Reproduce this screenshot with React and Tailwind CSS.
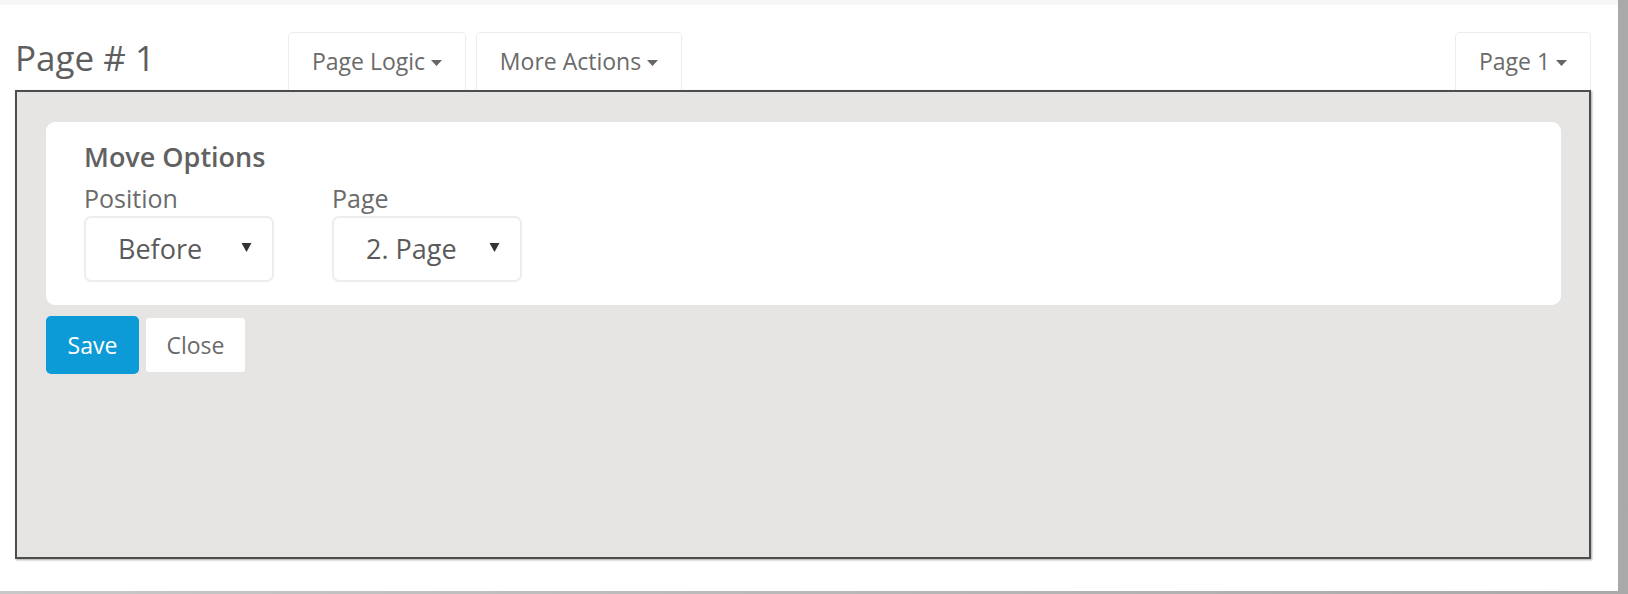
import React from "react";

function Caret({ className = "" }) {
  return (
    <svg width="11" height="6" viewBox="0 0 11 6" className={className}>
      <path d="M0 0 L11 0 L5.5 6 Z" fill="currentColor" />
    </svg>
  );
}

function Tab({ label, w }) {
  return (
    <div
      className={`h-[58px] ${w} bg-white border border-[#ececec] border-b-0 rounded-t-[5px] flex items-center justify-center gap-[6px] text-[23px] text-[#6a6a6a]`}
    >
      <span>{label}</span>
      <Caret className="mt-[3px] text-[#666]" />
    </div>
  );
}

function SelectBox({ label, value, textPad }) {
  return (
    <div className="flex flex-col">
      <div className="text-[25px] leading-[30px] text-[#6b6b6b]">{label}</div>
      <div
        className={`mt-[3px] h-[66px] w-[190px] bg-white border-2 border-[#ededed] rounded-[7px] flex items-center justify-between ${textPad} pr-[20px] text-[27px] text-[#5a5a5a]`}
      >
        <span>{value}</span>
        <svg width="11" height="11" viewBox="0 0 11 11" className="text-[#333] mb-[4px]">
          <path d="M0.5 1 L10.5 1 L5.5 10 Z" fill="currentColor" />
        </svg>
      </div>
    </div>
  );
}

export default function App() {
  return (
    <div
      className="w-[1628px] h-[594px] bg-gradient-to-r from-[#c8c8c8] to-[#a9a9a9] overflow-hidden"
      style={{ fontFamily: '"Open Sans", "Noto Sans", sans-serif' }}
    >
      <div className="w-[1618px] h-[591px] bg-white border-t-[5px] border-[#f6f6f6] pl-[15px] pr-[27px]">
        <div className="h-[85px] flex items-end">
          <div className="self-start mt-[32px] w-[273px] text-[35px] leading-[42px] text-[#5e5e5e]">
            Page # 1
          </div>
          <div className="flex gap-[10px]">
            <Tab label="Page Logic" w="w-[178px]" />
            <Tab label="More Actions" w="w-[206px]" />
          </div>
          <div className="flex-1" />
          <Tab label="Page 1" w="w-[136px]" />
        </div>
        <div className="h-[469px] bg-[#e6e5e3] border-2 border-[#4d4d4d] shadow-[1px_1px_2px_rgba(0,0,0,0.35)] pt-[30px] px-[29px] pr-[28px]">
          <div className="h-[183px] bg-white rounded-[9px] pl-[38px] pt-[14px]">
            <div className="text-[27px] leading-[42px] font-semibold text-[#616161]">
              Move Options
            </div>
            <div className="flex gap-[58px] mt-[5px]">
              <SelectBox label="Position" value="Before" textPad="pl-[32px]" />
              <SelectBox label="Page" value="2. Page" textPad="pl-[32px]" />
            </div>
          </div>
          <div className="flex items-center gap-[7px] mt-[11px]">
            <button className="h-[58px] w-[93px] bg-[#0d9bd8] rounded-[5px] text-white text-[23px]">
              Save
            </button>
            <button className="h-[54px] w-[99px] bg-white rounded-[3px] text-[#6a6a6a] text-[23px]">
              Close
            </button>
          </div>
        </div>
      </div>
    </div>
  );
}
